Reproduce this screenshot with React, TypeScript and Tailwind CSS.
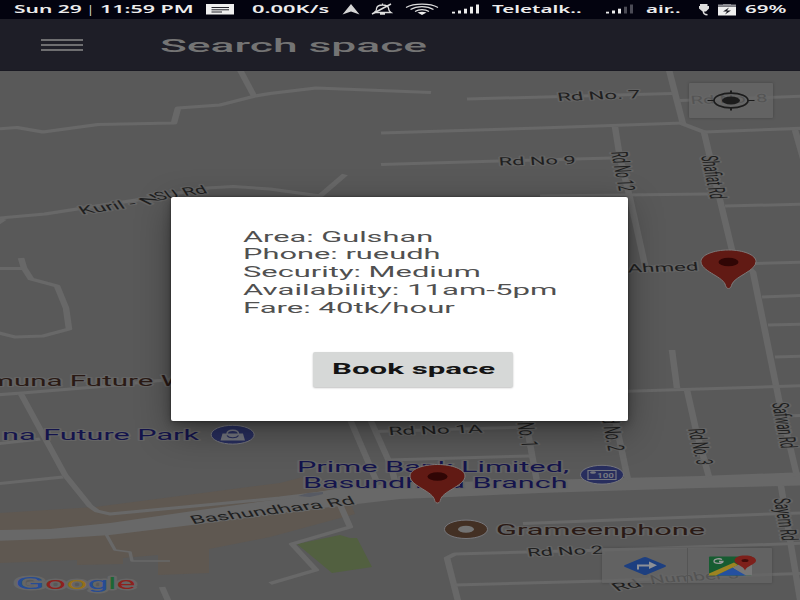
import { useLayoutEffect, useRef, type ReactNode } from "react";

type Pt = [number, number];

const ASPECT = 2.2;

/* Text stretched horizontally to fill exactly `width` pixels. */
function Stretch({ width, className = "", children }: { width: number; className?: string; children: ReactNode }) {
  const ref = useRef<HTMLSpanElement>(null);
  useLayoutEffect(() => {
    const el = ref.current;
    if (el) el.style.transform = `scaleX(${width / el.offsetWidth})`;
  }, [width]);
  return (
    <span className={`block shrink-0 ${className}`} style={{ width }}>
      <span ref={ref} className="inline-block origin-left whitespace-nowrap align-top">
        {children}
      </span>
    </span>
  );
}

function Road({ pts, w = 3, color = "#686868" }: { pts: Pt[]; w?: number; color?: string }) {
  const d = pts.map(([x, y], i) => `${i ? "L" : "M"}${(x / ASPECT).toFixed(2)} ${y}`).join("");
  return (
    <g transform={`scale(${ASPECT} 1)`}>
      <path d={d} fill="none" stroke={color} strokeWidth={w} strokeLinejoin="round" strokeLinecap="butt" />
    </g>
  );
}

/* Map label whose baseline runs between two points. */
function Label({
  from,
  to,
  size = 11.5,
  color = "#1f1f1f",
  halo = "#646464",
  children,
}: {
  from: Pt;
  to: Pt;
  size?: number;
  color?: string;
  halo?: string;
  children: ReactNode;
}) {
  const dx = (to[0] - from[0]) / ASPECT;
  const dy = to[1] - from[1];
  const angle = (Math.atan2(dy, dx) * 180) / Math.PI;
  return (
    <text
      transform={`translate(${from[0]} ${from[1]}) scale(${ASPECT} 1) rotate(${angle})`}
      fontSize={size}
      textLength={Math.hypot(dx, dy)}
      lengthAdjust="spacingAndGlyphs"
      fill={color}
      stroke={halo}
      strokeWidth={2}
      strokeLinejoin="round"
      paintOrder="stroke"
    >
      {children}
    </text>
  );
}

function Pin({ x, y }: { x: number; y: number }) {
  return (
    <g transform={`translate(${x} ${y})`}>
      <path
        d="M0 38.5C-2.5 38.5-2.500 36.500-3.500 34C-7 26-27.5 21-27.5 11.5C-27.5 5-15 0 0 0S27.5 5 27.5 11.5C27.5 21 7 26 3.500 34C2.500 36.500 2.500 38.500 0 38.500Z"
        fill="#611a14"
        stroke="#7c7878"
        strokeWidth="1"
      />
      <ellipse cy="12" rx="10" ry="4.300" fill="#300605" />
    </g>
  );
}

const roads: Pt[][] = [
  [[-5, 129], [17, 127.5], [43, 132], [98, 124.5], [174, 123], [178, 108], [220, 105], [255, 96], [270, 93.5], [316, 88], [431, 92.5]],
  [[238, 66], [254, 96]],
  [[-5, 218.5], [45, 214], [90, 207], [150, 198], [208, 188], [233, 186.5], [270, 189], [320, 196], [345, 174.5]],
  [[-5, 225], [4, 219]],
  [[-5, 268.5], [23, 268.5]],
  [[21, 258], [24, 268], [31, 279], [57, 286], [66, 308], [69, 329], [43, 336], [15, 337], [-5, 332]],
  [[-5, 395], [22, 393], [95, 387], [175, 379]],
  [[-5, 444], [40, 439]],
  [[-5, 484], [63, 477]],
  [[21, 394], [65, 475], [90, 506], [97, 511], [110, 514], [280, 498], [330, 492]],
  [[162, 587], [170, 605]],
  [[338, 500], [350, 527], [292, 544], [316, 570], [270, 583.5]],
  [[346, 410], [376, 480]],
  [[366, 410], [391, 466], [396, 485]],
  [[375, 431.5], [525, 427]],
  [[388, 460], [530, 456]],
  [[522, 400], [537, 482]],
  [[459, 605], [447, 558], [455, 554], [604, 550], [810, 543]],
  [[455, 585], [602, 581], [810, 573]],
  [[523, 523.5], [810, 512.5]],
  [[611, 400], [628, 480]],
  [[672, 350], [677, 388]],
  [[687, 390], [696, 430], [709, 477]],
  [[668, 66], [683, 124], [704, 132], [720, 200], [732, 250], [753, 272], [779, 400], [797, 476]],
  [[781, 486], [801, 605]],
  [[467, 99], [672, 93.5]],
  [[680, 100.5], [810, 96]],
  [[381, 133], [540, 128], [683, 123]],
  [[704, 132], [810, 128]],
  [[381, 164.5], [499, 161], [612, 158]],
  [[615, 127], [620, 158], [630, 198], [646, 270]],
  [[540, 196], [708, 194]],
  [[725, 206], [810, 204]],
  [[740, 264], [810, 262]],
  [[762, 297], [810, 295]],
  [[768, 325], [810, 324]],
  [[775, 357], [810, 356]],
  [[620, 391.5], [810, 385.5]],
  [[785, 416], [810, 415]],
  [[795, 130], [805, 165]],
];

const NAVY = "#14144c";
const BROWN = "#2a1a15";

const logo = [
  { ch: "G", x: 15, w: 30, color: "#264c94" },
  { ch: "o", x: 45, w: 21, color: "#8c221d" },
  { ch: "o", x: 66.500, w: 21, color: "#94701a" },
  { ch: "g", x: 87.500, w: 21, color: "#264c94" },
  { ch: "l", x: 108, w: 8.500, color: "#1d6633" },
  { ch: "e", x: 116.500, w: 19, color: "#8c221d" },
];

function MapCanvas() {
  return (
    <svg viewBox="0 71 800 529" className="block h-full w-full font-[Roboto,sans-serif]">
      <rect x="0" y="71" width="800" height="529" fill="#595959" />
      <path
        d="M0 513L95 507L280 483L303 477L345 490L355 514L270 537L209 549V573L158 575V555L123 558V564L77 565V560L0 563Z"
        fill="#5f5851"
      />
      <path d="M297 544L340 535L350 538L357 538L372 567L332 573Z" fill="#526040" />
      <path
        d="M-5 530L50 529L110 523L200 510L280 499L340 488L400 483L540 480L700 476L805 472V485.500L700 488L540 493L450 497L400 499L340 506L270 514L200 524L110 535L50 539L-5 541Z"
        fill="#686868"
      />
      {roads.map((pts, i) => (
        <Road key={i} pts={pts} />
      ))}
      <Road pts={[[106, 534], [115, 550], [130, 552], [132, 561], [170, 561]]} w={1.6} />
      <path d="M298 496L308 493L323 492V494L310 497Z" fill="#575a63" />

      <Label from={[558, 101]} to={[641, 98]}>Rd No. 7</Label>
      <Label from={[691, 104]} to={[768, 102]} color="#1c1c1c">Rd No. 8</Label>
      <Label from={[499, 165.5]} to={[576, 164]}>Rd No 9</Label>
      <Label from={[82, 214.5]} to={[138, 206.500]}>Kuril -</Label>
      <Label from={[148, 205.500]} to={[164, 199]} size={11}>N</Label>
      <Label from={[158, 200.500]} to={[180, 197]}>SU</Label>
      <Label from={[185, 196]} to={[208.500, 193]}>Rd</Label>
      <Label from={[611, 152]} to={[619, 191]} size={10.500}>Rd No 12</Label>
      <Label from={[701, 156]} to={[710.500, 199]} size={10.500}>Shafiat Rd</Label>
      <Label from={[628, 272.500]} to={[699, 270.500]}>Ahmed</Label>
      <Label from={[-12, 385.700]} to={[187, 385.700]} size={14} color={BROWN}>muna Future W</Label>
      <Label from={[2, 440]} to={[199, 440]} size={14} color={NAVY}>na Future Park</Label>
      <Label from={[389, 435]} to={[483, 432.500]}>Rd No 1A</Label>
      <Label from={[514.500, 408]} to={[522, 447]} size={10.500}>Rd No. 1</Label>
      <Label from={[600.500, 412]} to={[608.500, 451]} size={10.500}>Rd No. 2</Label>
      <Label from={[688, 429]} to={[697, 465]} size={10.500}>Rd No. 3</Label>
      <Label from={[772, 403]} to={[781, 448.500]} size={10.500}>Safwan Rd</Label>
      <Label from={[773.500, 498.500]} to={[782, 541]} size={10.500}>Sayem Rd</Label>
      <Label from={[193, 524]} to={[356, 504]} halo="#686868">Bashundhara Rd</Label>
      <Label from={[528, 556.500]} to={[604, 553.500]}>Rd No 2</Label>
      <Label from={[617, 591.500]} to={[643, 586]}>Rd</Label>
      <Label from={[651, 583.500]} to={[740, 578]} color="#1c1c1c">Number 3</Label>
      <Label from={[297, 472.300]} to={[569, 472.300]} size={14} color={NAVY}>Prime Bank Limited,</Label>
      <Label from={[303, 487.700]} to={[567.500, 487.700]} size={14} color={NAVY}>Basundhara Branch</Label>
      <Label from={[496, 534.700]} to={[705, 534.700]} size={14} color={BROWN}>Grameenphone</Label>

      <g stroke="#77777c" strokeWidth="1">
        <ellipse cx="232.700" cy="434.700" rx="21.500" ry="9.400" fill="#282e5e" />
        <ellipse cx="602" cy="474.700" rx="21.500" ry="9.400" fill="#282e5e" />
        <ellipse cx="466" cy="529.300" rx="21.500" ry="9.200" fill="#433024" />
      </g>
      {/* shopping bag */}
      <path d="M222.500 433.500H243L245 440.500H220.500Z" fill="#74767f" />
      <path d="M227 434C227 429 238.500 429 238.500 434" fill="none" stroke="#74767f" strokeWidth="1.500" />
      <path d="M227 435.500C229 438.500 236.500 438.500 238.500 435.500" fill="none" stroke="#282e5e" strokeWidth="1.200" />
      {/* cash machine */}
      <path d="M588 470.500H616V479.500H588Z" fill="none" stroke="#74767f" strokeWidth="1.200" />
      <ellipse cx="593" cy="472.500" rx="3" ry="1.300" fill="#74767f" />
      <text x="597" y="478" fontSize="7" fontWeight="700" textLength="17" lengthAdjust="spacingAndGlyphs" fill="#74767f">
        100
      </text>
      <ellipse cx="466" cy="529.300" rx="8" ry="3.500" fill="#737373" />

      <Pin x={728.5} y={250} />
      <Pin x={437.5} y={464.5} />

      {/* wordmark: halo pass first, so that it never covers a neighbouring letter */}
      <g fontSize="17" fontWeight="400" strokeLinejoin="round">
        {logo.map((l, i) => (
          <text key={i} x={l.x} y="589" textLength={l.w} lengthAdjust="spacingAndGlyphs" fill="#666666" stroke="#666666" strokeWidth="3">
            {l.ch}
          </text>
        ))}
        {logo.map((l, i) => (
          <text key={i} x={l.x} y="589" textLength={l.w} lengthAdjust="spacingAndGlyphs" fill={l.color}>
            {l.ch}
          </text>
        ))}
      </g>
    </svg>
  );
}

function SignalBars({ active }: { active: number }) {
  return (
    <svg width="28" height="10" viewBox="0 0 28 10" className="shrink-0">
      {[1.8, 3, 4.8, 6.8, 9].map((h, i) => (
        <rect key={i} x={i * 6} y={9.5 - h} width="3" height={h} fill={i < active ? "#ececec" : "#4b4b55"} />
      ))}
    </svg>
  );
}

function StatusBar() {
  return (
    <div className="flex h-[19px] shrink-0 items-start bg-[#03030f] pl-[14px] pt-[2px] font-['Noto_Sans',sans-serif] text-[10.500px] font-semibold leading-[15px] text-[#ececec]">
      <Stretch width={68}>Sun 29</Stretch>
      <Stretch width={5} className="ml-[6px]">|</Stretch>
      <Stretch width={94} className="ml-[7px]">11:59 PM</Stretch>
      <svg width="28" height="11" viewBox="0 0 28 11" className="ml-[12px] mt-[2px] shrink-0">
        <rect width="28" height="10.500" fill="#efefef" />
        <path d="M5.500 3.500H23M5.500 5.800H23M5.500 8H16" stroke="#22222a" strokeWidth="1" />
      </svg>
      <Stretch width={77} className="ml-[18px]">0.00K/s</Stretch>
      <svg width="18" height="11" viewBox="0 0 18 11" className="ml-[13px] mt-[2px] shrink-0">
        <path d="M9 0L17.500 10.500L9 7.500L0.500 10.500Z" fill="#d5d5d5" />
      </svg>
      <svg width="22" height="12" viewBox="0 0 22 12" className="ml-[11px] mt-[1px] shrink-0" fill="none" stroke="#dedede" strokeWidth="1.300">
        <path d="M3 9.500H20C17 7.500 18 6.500 17.500 5C17 2.500 14.500 2 11.500 2S6 3 5.500 5.500C5.500 7 6 8 3 9.500ZM9 11H14M11.500 0.500V2" />
        <path d="M1 11L20 1" strokeWidth="1.500" />
      </svg>
      <svg width="34" height="12" viewBox="0 0 34 12" className="ml-[12px] mt-[1px] shrink-0" fill="none" stroke="#dedede" strokeWidth="1.400">
        <path d="M1 4.500C9 0 25 0 33 4.500M5.500 6.500C12 2.700 22 2.700 28.500 6.500M10 8.500C14 6 20 6 24 8.500" />
        <path d="M12.500 9.500Q17 7.800 21.500 9.500L17 12Z" fill="#ececec" stroke="none" />
      </svg>
      <div className="ml-[13px] mt-[2px] h-[10px] leading-[0]"><SignalBars active={5} /></div>
      <Stretch width={90} className="ml-[12px]">Teletalk..</Stretch>
      <div className="ml-[24px] mt-[2px] h-[10px] leading-[0]"><SignalBars active={3} /></div>
      <Stretch width={35} className="ml-[12px]">air..</Stretch>
      <svg width="12" height="12" viewBox="0 0 12 12" className="ml-[17px] mt-[2px] shrink-0">
        <path d="M2 0H9.500V2H11V4.500L8 7.500H4.500L1 4.500V2H2Z" fill="#dedede" />
        <path d="M5.500 7Q5 10.500 9.500 10.800" fill="none" stroke="#dedede" strokeWidth="1.500" />
      </svg>
      <svg width="18" height="12" viewBox="0 0 18 12" className="ml-[8px] mt-[2px] shrink-0">
        <path d="M0 0.500H5V0H13V0.500H18V2H0Z" fill="#8d8d93" />
        <rect y="2.500" width="18" height="9" fill="#efefef" />
        <path d="M11 3.500L5 7.500H9L7 10.500L13 6.500H9Z" fill="#1a1a22" />
      </svg>
      <Stretch width={41} className="ml-[9px]">69%</Stretch>
    </div>
  );
}

function AppBar() {
  return (
    <header className="flex h-[52px] shrink-0 items-center border-b border-[#191922] bg-[#1e1e27] pl-[41px]">
      <div className="flex w-[42px] flex-col gap-[3px] pt-px">
        <span className="h-[2px] bg-[#6e6e70]" />
        <span className="h-[2px] bg-[#6e6e70]" />
        <span className="h-[2px] bg-[#6e6e70]" />
      </div>
      <h1 className="ml-[77px] pt-[2px] text-[19px] font-medium leading-6 text-[#747474]">
        <Stretch width={266}>Search space</Stretch>
      </h1>
    </header>
  );
}

function LocateButton() {
  return (
    <button className="absolute left-[689px] top-[12px] flex h-[35px] w-[84px] items-center justify-center rounded-[1px] bg-[#676767]/75 shadow-[0_0_3px_rgba(0,0,0,0.25)]">
      <svg width="48" height="21" viewBox="0 0 48 21" fill="none" stroke="#1c1c1c">
        <ellipse cx="24" cy="10.500" rx="17" ry="7.300" strokeWidth="1.700" />
        <ellipse cx="24" cy="10.500" rx="9" ry="4" fill="#1c1c1c" stroke="none" />
        <path d="M24 0.500V4M24 17V20.500" strokeWidth="2" />
        <path d="M0.500 10.500H7M41 10.500H47.500" strokeWidth="1.200" />
      </svg>
    </button>
  );
}

function MapToolbar() {
  return (
    <div className="absolute left-[602px] top-[477px] flex h-[35px] w-[170px] rounded-[1px] bg-[#656565]/75 shadow-[0_0_3px_rgba(0,0,0,0.22)]">
      <button className="flex w-[86px] items-center justify-center border-r border-[#555555]">
        <svg width="44" height="20" viewBox="0 0 44 20">
          <path d="M20 1.500Q22 0.500 24 1.500L42 9Q44 10 42 11L24 18.500Q22 19.500 20 18.500L2 11Q0 10 2 9Z" fill="#1d3f80" />
          <path d="M15 13.500V9.500H27" fill="none" stroke="#8d9097" strokeWidth="2" />
          <path d="M26 5.500L34 9.300L26 13Z" fill="#8d9097" />
        </svg>
      </button>
      <button className="flex w-[84px] items-center justify-center pl-[4px]">
        <svg width="48" height="21" viewBox="0 0 48 21">
          <rect x="1" y="1.500" width="43" height="19" rx="1" fill="#175c31" />
          <path d="M44 5V20.500H36L24 12.500L44 3Z" fill="#777777" />
          <path d="M8 20.500L24 12.500L38 20.500Z" fill="#2450a0" />
          <path d="M1 18.500L26 7.500L30 10L8 20.500H1Z" fill="#9c8322" />
          <path d="M14 4.500C12 3.300 6 3.500 6 6.300S15 9 15 6.500H11" fill="none" stroke="#9a9a9a" strokeWidth="1.300" />
          <path d="M37 15.500C36 11 26.500 9.500 26.500 5.500C26.500 2.500 31 0.500 37 0.500S48 2.500 48 5.500C48 9.500 38 11 37 15.500Z" fill="#7d201b" />
          <ellipse cx="37" cy="5.500" rx="3.500" ry="1.600" fill="#400c0a" />
        </svg>
      </button>
    </div>
  );
}

const details = [
  { text: "Area: Gulshan", width: 191 },
  { text: "Phone: rueudh", width: 198 },
  { text: "Security: Medium", width: 238 },
  { text: "Availability: 11am-5pm", width: 314 },
  { text: "Fare: 40tk/hour", width: 211 },
];

function SpaceDialog() {
  return (
    <div
      role="dialog"
      className="absolute left-[171px] top-[126px] flex h-[224px] w-[457px] flex-col rounded-[2px] bg-white pl-[72px] pt-[31.500px] shadow-[0_10px_34px_rgba(0,0,0,0.38),0_2px_8px_rgba(0,0,0,0.3),0_0_2px_rgba(0,0,0,0.5)]"
    >
      <div className="flex flex-col text-[14px] leading-[17.900px] text-[#505050]">
        {details.map((d) => (
          <Stretch key={d.text} width={d.width}>
            {d.text}
          </Stretch>
        ))}
      </div>
      <button className="ml-[70px] mt-[33.500px] flex h-[35px] w-[200px] items-center justify-center rounded-[2px] bg-[#d6d8d7] pb-px text-[14px] font-bold leading-5 text-[#141414] shadow-[0_1px_2px_rgba(0,0,0,0.25)]">
        <Stretch width={163} className="text-left">Book space</Stretch>
      </button>
    </div>
  );
}

export default function App() {
  return (
    <div className="flex h-[600px] w-[800px] flex-col overflow-hidden bg-[#595959] font-[Roboto,sans-serif]">
      <StatusBar />
      <AppBar />
      <main className="relative h-[529px] overflow-hidden">
        <MapCanvas />
        <LocateButton />
        <MapToolbar />
        <SpaceDialog />
      </main>
    </div>
  );
}
